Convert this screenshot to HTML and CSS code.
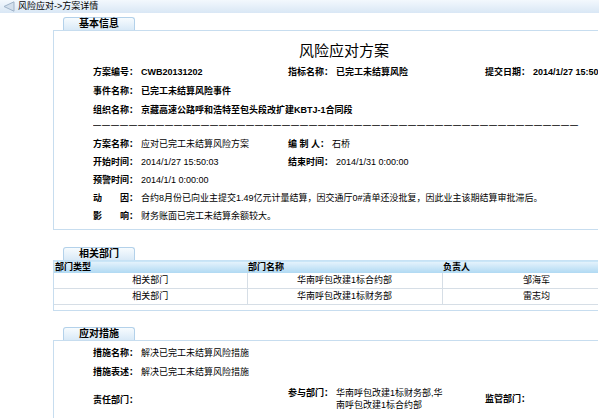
FILE: index.html
```html
<!DOCTYPE html>
<html lang="zh-CN">
<head>
<meta charset="utf-8">
<title>方案详情</title>
<link rel="stylesheet" href="styles.css">
</head>
<body>
<div class="topbar">
  <svg class="back" width="12" height="11" viewBox="0 0 12 11"><polygon points="1,5.5 11,0.8 11,10.2" fill="#d3dfec" stroke="#9fb3c8" stroke-width="1"/></svg>
  <span>风险应对-&gt;方案详情</span>
</div>
<div class="page">
  <div class="tab">基本信息</div>
  <div class="panel info">
    <div class="title">风险应对方案</div>
    <div class="grid top">
      <div class="cell strong"><span class="lbl">方案编号：</span><span>CWB20131202</span></div>
      <div class="cell strong"><span class="lbl">指标名称：</span><span>已完工未结算风险</span></div>
      <div class="cell strong"><span class="lbl">提交日期：</span><span>2014/1/27 15:50:03</span></div>
      <div class="cell strong full"><span class="lbl">事件名称：</span><span>已完工未结算风险事件</span></div>
      <div class="cell strong full"><span class="lbl">组织名称：</span><span>京藏高速公路呼和浩特至包头段改扩建KBTJ-1合同段</span></div>
    </div>
    <div class="dashes">——————————————————————————————————————————————————————</div>
    <div class="grid bottom">
      <div class="cell"><span class="lbl">方案名称：</span><span>应对已完工未结算风险方案</span></div>
      <div class="cell full2"><span class="lbl">编 制 人：</span><span>石桥</span></div>
      <div class="cell"><span class="lbl">开始时间：</span><span>2014/1/27 15:50:03</span></div>
      <div class="cell full2"><span class="lbl">结束时间：</span><span>2014/1/31 0:00:00</span></div>
      <div class="cell full"><span class="lbl">预警时间：</span><span>2014/1/1 0:00:00</span></div>
      <div class="cell full"><span class="lbl">动　　因：</span><span>合约8月份已向业主提交1.49亿元计量结算，因交通厅0#清单还没批复，因此业主该期结算审批滞后。</span></div>
      <div class="cell full"><span class="lbl">影　　响：</span><span>财务账面已完工未结算余额较大。</span></div>
    </div>
  </div>

  <div class="tab gap">相关部门</div>
  <div class="tablewrap">
    <table class="dept">
      <colgroup><col class="c1"><col class="c2"><col class="c3"></colgroup>
      <thead>
        <tr><th>部门类型</th><th>部门名称</th><th>负责人</th></tr>
      </thead>
      <tbody>
        <tr><td>相关部门</td><td>华南呼包改建1标合约部</td><td>邹海军</td></tr>
        <tr><td>相关部门</td><td>华南呼包改建1标财务部</td><td>雷志均</td></tr>
      </tbody>
    </table>
    <div class="tfoot"></div>
  </div>

  <div class="tab gap2">应对措施</div>
  <div class="panel measures">
    <div class="mrow"><span class="lbl">措施名称：</span><span>解决已完工未结算风险措施</span></div>
    <div class="mrow"><span class="lbl">措施表述：</span><span>解决已完工未结算风险措施</span></div>
    <div class="grid tri">
      <div class="cell duty"><span class="lbl">责任部门：</span></div>
      <div class="cell join"><span class="lbl">参与部门：</span><span class="wrapval">华南呼包改建1标财务部,华南呼包改建1标合约部</span></div>
      <div class="cell"><span class="lbl">监管部门：</span></div>
    </div>
  </div>
</div>
</body>
</html>
```

FILE: styles.css
```css
html, body {
  margin: 0;
  padding: 0;
  overflow: hidden;
  background: #fff;
}
body {
  width: 599px;
  height: 418px;
  font-family: "Liberation Sans", "Noto Sans CJK SC", sans-serif;
  font-size: 9px;
  color: #000;
}
.topbar {
  height: 13px;
  display: flex;
  align-items: center;
  gap: 3px;
  padding-left: 3px;
  line-height: 13px;
  background: linear-gradient(#f3f8fd, #d9e7f5);
}
.back { display: block; }

.page {
  margin-left: 53px;
  width: 545px;
  overflow: hidden;
  padding-top: 4px;
}
.tab {
  margin-left: 10px;
  width: 70px;
  height: 12px;
  line-height: 12px;
  border: 1px solid #b3d1ea;
  border-bottom: none;
  border-radius: 3px 3px 0 0;
  background: linear-gradient(#f7fbfe, #d9e9f7);
  text-align: center;
  font-weight: bold;
  font-size: 10px;
}
.tab.gap { margin-top: 17px; }
.tab.gap2 { margin-top: 16px; }

.panel {
  border-top: 1px solid #c7ddef;
  border-left: 1px solid #c7ddef;
  border-bottom: 1px solid #c7ddef;
}
.info {
  padding: 11px 0 4px 39px;
}
.title {
  height: 18px;
  line-height: 18px;
  font-size: 15px;
  text-align: center;
  padding-left: 0;
  margin-left: -3px;
}
.grid {
  display: grid;
  grid-template-columns: 195px 197px 1fr;
}
.grid.top { margin-top: 3px; }
.grid.top .cell { height: 19px; line-height: 19px; }
.grid.bottom { margin-top: 5px; }
.grid.bottom .cell { height: 18px; line-height: 18px; }
.cell { white-space: nowrap; }
.full { grid-column: 1 / -1; }
.full2 { grid-column: 2 / -1; }
.strong { font-weight: bold; }
.lbl { font-weight: bold; margin-right: 3px; }
.dashes {
  height: 10px;
  line-height: 10px;
  font-weight: bold;
  font-size: 8px;
  letter-spacing: 1px;
  white-space: nowrap;
  overflow: hidden;
  width: 488px;
}

.tablewrap {
  border-left: 1px solid #c7ddef;
  border-bottom: 1px solid #c7ddef;
}
.dept {
  width: 577px;
  border-collapse: collapse;
  table-layout: fixed;
}
.c1 { width: 193px; }
.c2 { width: 195px; }
.c3 { width: 189px; }
.dept th {
  height: 12px;
  padding: 0 1px;
  line-height: 12px;
  text-align: left;
  font-weight: bold;
  background: linear-gradient(#e6f3fc, #aed8f2);
  border-top: 1px solid #c7e2f5;
}
.dept td {
  height: 15px;
  padding: 0;
  line-height: 15px;
  text-align: center;
  border-bottom: 1px solid #d6dee6;
  border-right: 1px solid #d6dee6;
}
.tfoot { height: 5px; }

.measures {
  padding: 3px 0 0 39px;
  border-bottom: none;
  height: 90px;
}
.mrow {
  height: 19px;
  line-height: 19px;
  white-space: nowrap;
}
.grid.tri {
  margin-top: 2px;
  align-items: center;
  height: 30px;
}
.duty { padding-top: 2px; }
.join {
  display: flex;
  align-items: flex-start;
  line-height: 12px;
}
.wrapval {
  width: 108px;
  white-space: normal;
  line-height: 12px;
}
.tri .cell { line-height: 12px; }
```
